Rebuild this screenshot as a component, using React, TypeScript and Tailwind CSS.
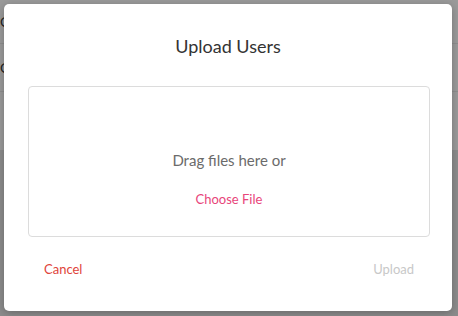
export default function App() {
  return (
    <div className="relative h-[316px] w-[458px] overflow-hidden bg-[#8c8c8c] font-['Lato','Noto_Sans',sans-serif]">
      {/* dimmed page behind */}
      <div className="flex h-[150px] flex-col bg-[#9a9a9a]">
        <div className="flex h-[44px] items-center border-b border-[#8e8e8e] text-[14px] text-[#222]">C</div>
        <div className="flex h-[48px] items-center border-b border-[#8e8e8e] text-[14px] text-[#222]">C</div>
      </div>

      <div className="absolute left-[4px] top-[4px] flex h-[307px] w-[448px] flex-col rounded-[5px] bg-white shadow-[0_2px_8px_rgba(0,0,0,0.25)]">
        <h2 className="pt-[30px] text-center text-[18px] leading-[24px] text-[#333]">Upload Users</h2>
        <div className="ml-[24px] mr-[22px] mt-[28px] flex h-[151px] flex-col items-center rounded-[4px] border border-[#dcdcdc] pt-[63px]">
          <p className="text-[15px] leading-[20px] text-[#6b6b6b]">Drag files here or</p>
          <button className="mt-[20px] text-[13px] leading-[18px] text-[#e8457a]">Choose File</button>
        </div>
        <div className="flex items-center justify-between pl-[40px] pr-[38px] pt-[23px]">
          <button className="text-[13px] leading-[18px] text-[#e0443b]">Cancel</button>
          <button className="text-[13px] leading-[18px] text-[#c8c8c8]">Upload</button>
        </div>
      </div>
    </div>
  );
}
